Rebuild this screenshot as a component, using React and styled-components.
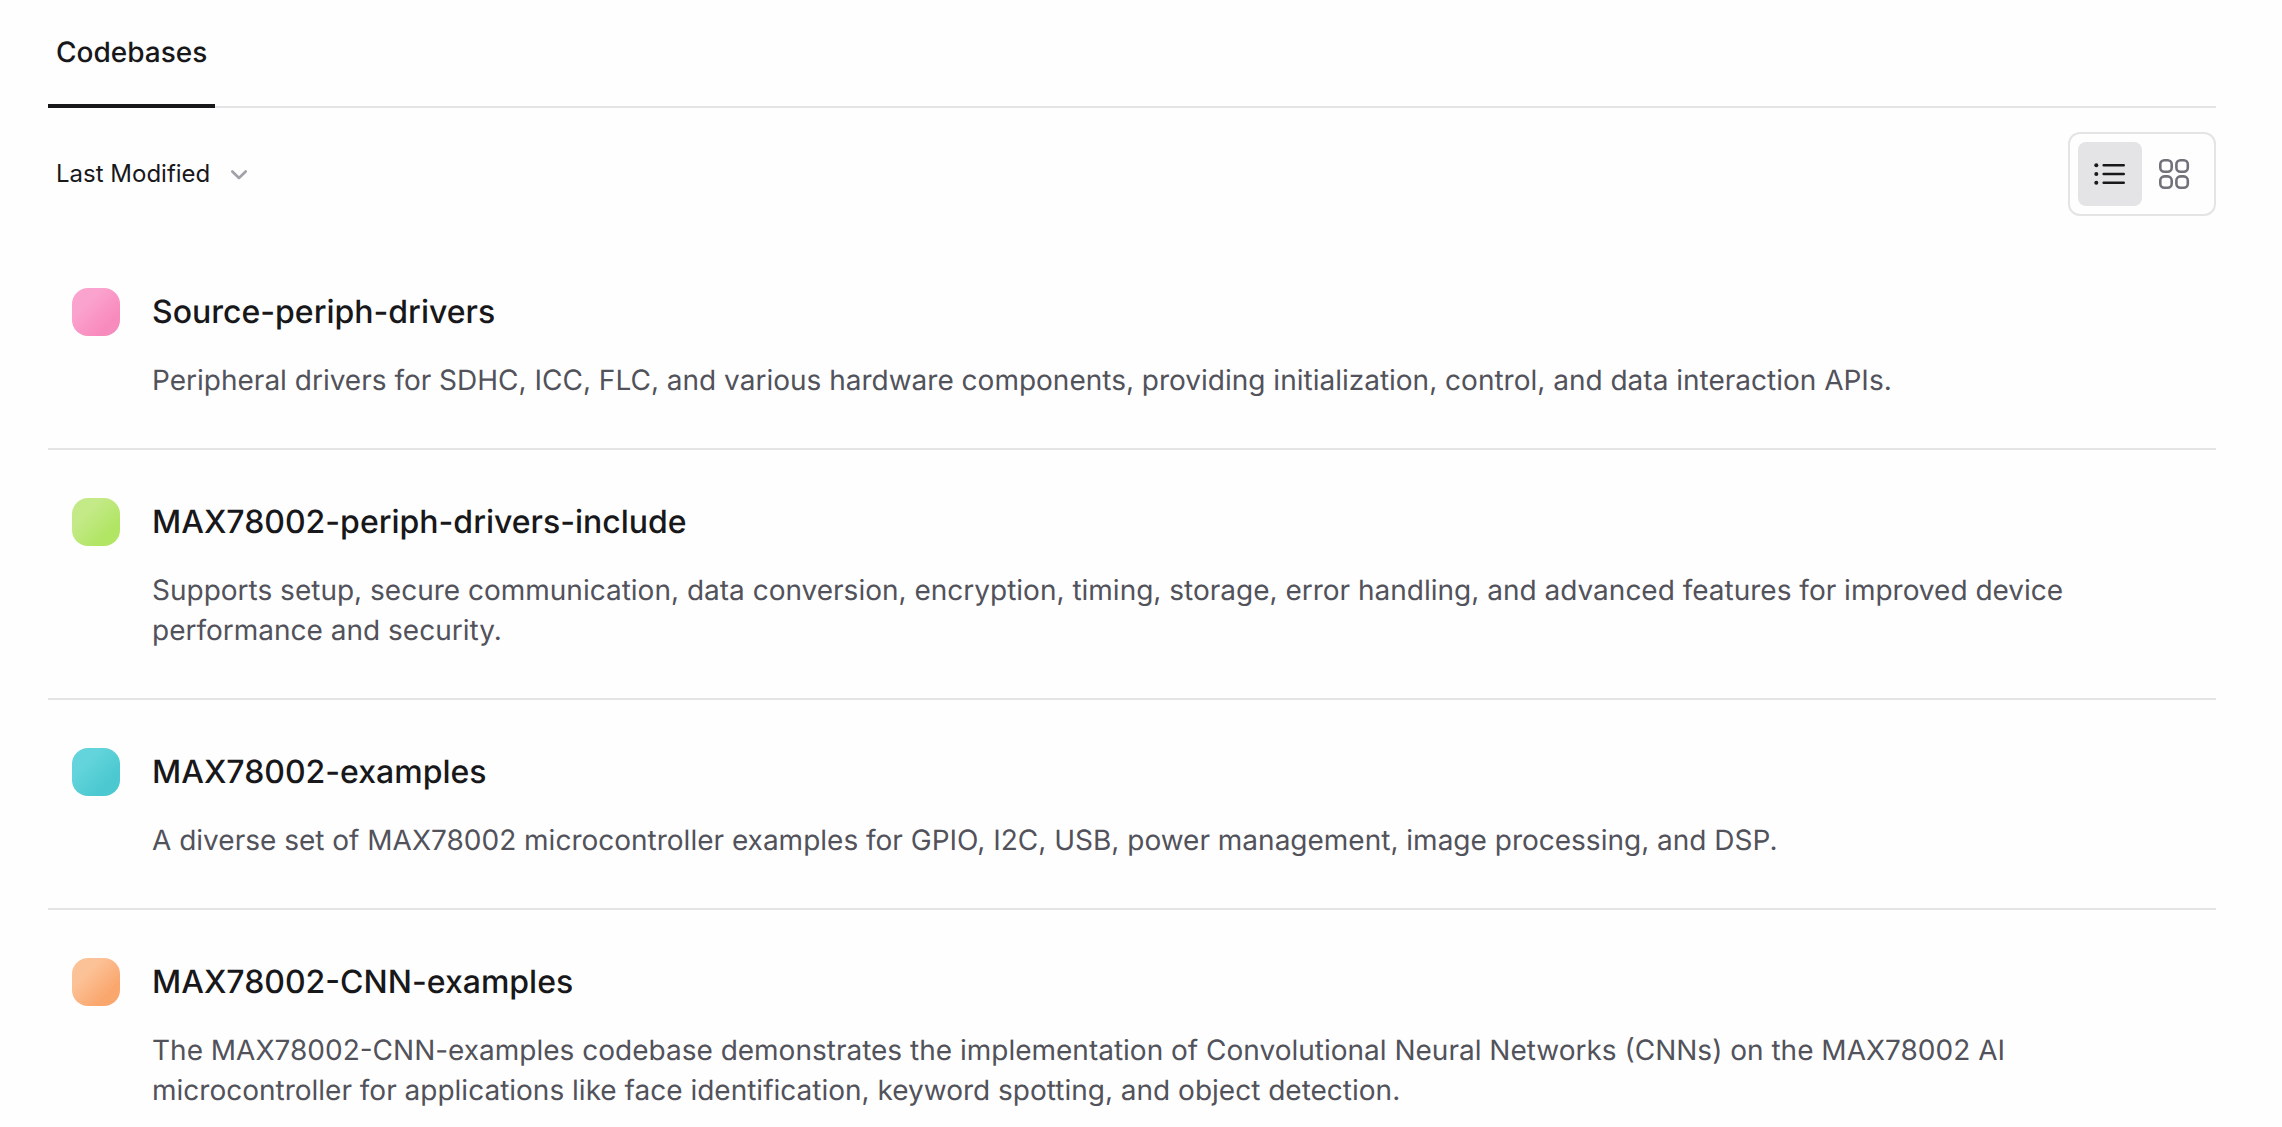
import { useState } from 'react';
import styled, { createGlobalStyle } from 'styled-components';

const GlobalStyle = createGlobalStyle`
    * {
        box-sizing: border-box;
    }

    body {
        margin: 0;
        background-color: #fefefe;
        color: #18181b;
        font-family: Inter, "Liberation Sans", sans-serif;
        text-rendering: geometricPrecision;
    }
`;

const Page = styled.main`
    padding: 0 66px 0 48px;
`;

const Tabs = styled.nav`
    display: flex;
    height: 108px;
    box-shadow: inset 0 -2px 0 #e4e4e4;
`;

const Tab = styled.button`
    padding: 0 8px;
    border: 0;
    border-bottom: 4px solid ${({ $active }) => ($active ? '#18181b' : 'transparent')};
    background: none;
    color: inherit;
    font: 500 28px/40px Inter, "Liberation Sans", sans-serif;
    text-rendering: inherit;
    cursor: pointer;
`;

const Toolbar = styled.div`
    display: flex;
    justify-content: space-between;
    align-items: center;
    padding: 24px 0 24px 8px;
`;

const SortField = styled.label`
    position: relative;
    display: block;
    color: #a1a1aa;

    svg {
        position: absolute;
        right: 0;
        top: 8px;
        pointer-events: none;
    }
`;

const SortSelect = styled.select`
    appearance: none;
    padding: 0 40px 0 0;
    border: 0;
    background: none;
    color: #18181b;
    font: 400 24px/40px Inter, "Liberation Sans", sans-serif;
    cursor: pointer;
`;

const ViewToggle = styled.div`
    display: flex;
    padding: 8px;
    border: 2px solid #e4e4e4;
    border-radius: 12px;
`;

const ViewButton = styled.button`
    display: flex;
    justify-content: center;
    align-items: center;
    width: 64px;
    height: 64px;
    padding: 0;
    border: 0;
    border-radius: 8px;
    background-color: ${({ $active }) => ($active ? '#e4e4e7' : 'transparent')};
    color: ${({ $active }) => ($active ? '#18181b' : '#71717a')};
    cursor: pointer;
`;

const List = styled.ul`
    margin: 0;
    padding: 0;
    list-style: none;
`;

const Row = styled.li`
    display: flex;
    gap: 32px;
    padding: 48px 24px;
    border-bottom: 2px solid #e4e4e4;
`;

const Swatch = styled.div`
    flex: none;
    width: 48px;
    height: 48px;
    border-radius: 16px;
    background: linear-gradient(135deg, ${({ $from }) => $from} 30%, ${({ $to }) => $to} 75%);
`;

const Info = styled.div`
    display: flex;
    flex-direction: column;
    gap: 24px;
    min-width: 0;
`;

const Name = styled.h2`
    margin: 0;
    font-size: 32px;
    line-height: 48px;
    font-weight: 500;
`;

const Description = styled.p`
    margin: 0;
    color: #52525b;
    font-size: 28px;
    line-height: 40px;
`;

const codebases = [
    {
        name: 'Source-periph-drivers',
        description: 'Peripheral drivers for SDHC, ICC, FLC, and various hardware components, providing initialization, control, and data interaction APIs.',
        from: '#fba3cf',
        to: '#f88bbd',
    },
    {
        name: 'MAX78002-periph-drivers-include',
        description: 'Supports setup, secure communication, data conversion, encryption, timing, storage, error handling, and advanced features for improved device performance and security.',
        from: '#c4ea88',
        to: '#b1e564',
    },
    {
        name: 'MAX78002-examples',
        description: 'A diverse set of MAX78002 microcontroller examples for GPIO, I2C, USB, power management, image processing, and DSP.',
        from: '#63d4db',
        to: '#4bc8d0',
    },
    {
        name: 'MAX78002-CNN-examples',
        description: 'The MAX78002-CNN-examples codebase demonstrates the implementation of Convolutional Neural Networks (CNNs) on the MAX78002 AI microcontroller for applications like face identification, keyword spotting, and object detection.',
        from: '#fcc297',
        to: '#faa76e',
    },
];

function ChevronIcon() {
    return (
        <svg width="24" height="24" viewBox="0 0 24 24" fill="none" stroke="currentColor" strokeWidth="2.6" strokeLinecap="round" strokeLinejoin="round" aria-hidden="true">
            <path d="M5.3 9.5 12 16l6.7-6.5"/>
        </svg>
    );
}

function ListIcon() {
    return (
        <svg width="48" height="48" viewBox="0 0 48 48" fill="currentColor" aria-hidden="true">
            <circle cx="10.3" cy="15.2" r="2"/>
            <circle cx="10.3" cy="24" r="2"/>
            <circle cx="10.3" cy="32.8" r="2"/>
            <path d="M17.7 15.2h20M17.7 24h20M17.7 32.8h20" stroke="currentColor" strokeWidth="2.6" strokeLinecap="round"/>
        </svg>
    );
}

function GridIcon() {
    return (
        <svg width="48" height="48" viewBox="0 0 48 48" fill="none" stroke="currentColor" strokeWidth="2.6" aria-hidden="true">
            <rect x="10.3" y="10.3" width="11.4" height="11.4" rx="4"/>
            <rect x="26.4" y="10.3" width="11.4" height="11.4" rx="4"/>
            <rect x="10.3" y="26.4" width="11.4" height="11.4" rx="4"/>
            <rect x="26.4" y="26.4" width="11.4" height="11.4" rx="4"/>
        </svg>
    );
}

export default function App() {

    const [view, setView] = useState('list');

    return (
        <Page>
            <GlobalStyle/>
            <Tabs>
                <Tab type="button" $active>Codebases</Tab>
            </Tabs>
            <Toolbar>
                <SortField>
                    <SortSelect aria-label="Sort by" defaultValue="modified">
                        <option value="modified">Last Modified</option>
                    </SortSelect>
                    <ChevronIcon/>
                </SortField>
                <ViewToggle>
                    <ViewButton type="button" aria-label="List view" $active={view === 'list'} onClick={() => setView('list')}>
                        <ListIcon/>
                    </ViewButton>
                    <ViewButton type="button" aria-label="Grid view" $active={view === 'grid'} onClick={() => setView('grid')}>
                        <GridIcon/>
                    </ViewButton>
                </ViewToggle>
            </Toolbar>
            <List>
                {codebases.map(({ name, description, from, to }) => (
                    <Row key={name}>
                        <Swatch $from={from} $to={to}/>
                        <Info>
                            <Name>{name}</Name>
                            <Description>{description}</Description>
                        </Info>
                    </Row>
                ))}
            </List>
        </Page>
    );
}
